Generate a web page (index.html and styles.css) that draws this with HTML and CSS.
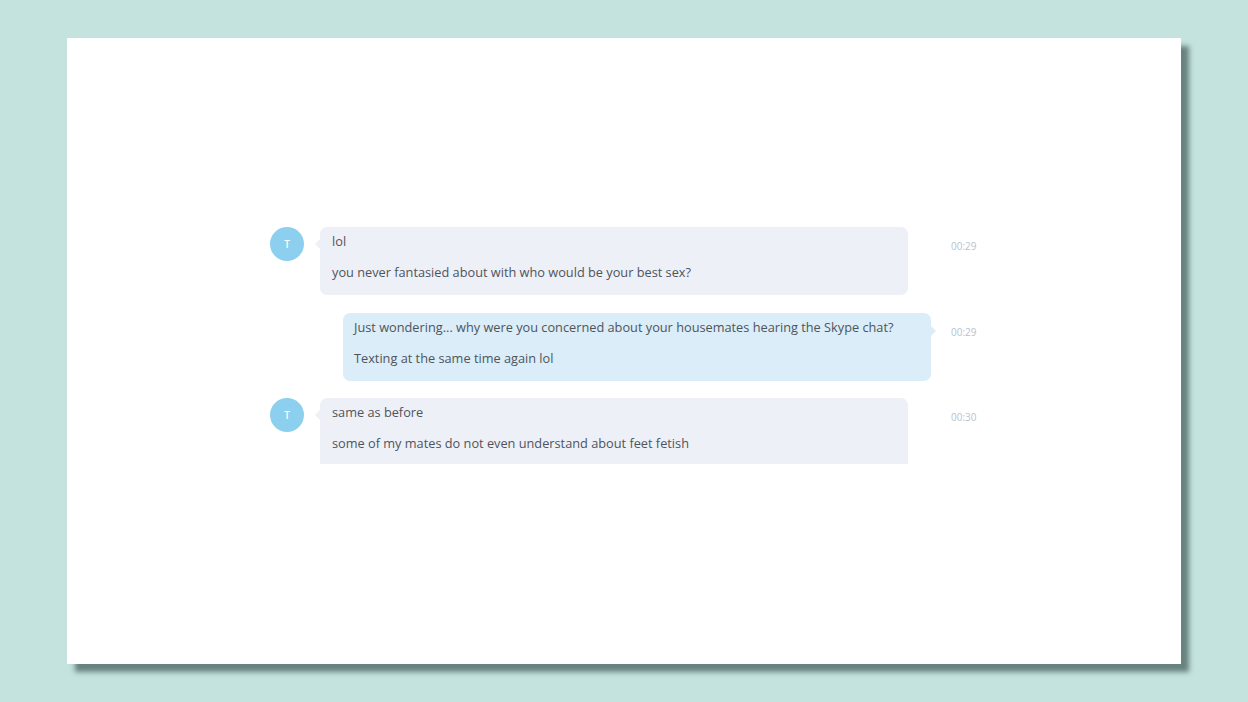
FILE: index.html
```html
<!DOCTYPE html>
<html>
<head>
<meta charset="utf-8">
<link rel="stylesheet" href="styles.css">
</head>
<body>
<div class="card">
  <div class="chat">
    <div class="row">
      <div class="avatar">T</div>
      <div class="main">
        <div class="bubble in">
          <p>lol</p>
          <p>you never fantasied about with who would be your best sex?</p>
        </div>
      </div>
      <div class="time">00:29</div>
    </div>
    <div class="row">
      <div class="spacer"></div>
      <div class="main out-main">
        <div class="bubble out">
          <p>Just wondering... why were you concerned about your housemates hearing the Skype chat?</p>
          <p>Texting at the same time again lol</p>
        </div>
      </div>
      <div class="time">00:29</div>
    </div>
    <div class="row">
      <div class="avatar">T</div>
      <div class="main">
        <div class="bubble in cut">
          <p>same as before</p>
          <p>some of my mates do not even understand about feet fetish</p>
        </div>
      </div>
      <div class="time">00:30</div>
    </div>
  </div>
</div>
</body>
</html>
```
FILE: styles.css
```css
html, body {
  margin: 0;
  padding: 0;
}
body {
  background: #c4e3de;
  width: 1248px;
  height: 702px;
  overflow: hidden;
  font-family: "Open Sans", "Liberation Sans", sans-serif;
}
.card {
  margin: 38px 0 0 67px;
  width: 1114px;
  height: 626px;
  background: #ffffff;
  box-shadow: 8px 8px 5px rgba(80, 105, 102, 0.8);
  box-sizing: border-box;
  padding: 189px 0 0 203px;
}
.chat {
  display: flex;
  flex-direction: column;
  gap: 17.5px;
}
.row {
  display: grid;
  grid-template-columns: 34px 611px auto;
  column-gap: 16px;
  align-items: start;
}
.row .time {
  margin-left: 4px;
}
.avatar {
  width: 34px;
  height: 34px;
  border-radius: 50%;
  background: #8dcfee;
  color: #fff;
  font-size: 10px;
  font-weight: 600;
  display: flex;
  align-items: center;
  justify-content: center;
}
.main {
  display: flex;
}
.out-main {
  justify-content: flex-end;
}
.bubble {
  position: relative;
  width: 588px;
  height: 68px;
  box-sizing: border-box;
  padding: 5px 12px 0 12px;
  border-radius: 7px;
  display: flex;
  flex-direction: column;
  gap: 13px;
}
.bubble p {
  margin: 0;
  font-size: 12.75px;
  line-height: 18px;
  color: #4f545b;
  white-space: nowrap;
}
.in {
  background: #eef0f7;
}
.in::before {
  content: "";
  position: absolute;
  left: -5px;
  top: 12px;
  border-top: 5px solid transparent;
  border-bottom: 5px solid transparent;
  border-right: 5px solid #eef0f7;
}
.cut {
  height: 66px;
  border-radius: 7px 7px 0 0;
}
.out {
  background: #daedf8;
  padding-left: 11px;
}
.out::after {
  content: "";
  position: absolute;
  right: -5px;
  top: 13px;
  border-top: 5px solid transparent;
  border-bottom: 5px solid transparent;
  border-left: 5px solid #daedf8;
}
.time {
  font-size: 10px;
  color: #b8c2cd;
  padding-top: 12px;
  line-height: 14px;
}
```
